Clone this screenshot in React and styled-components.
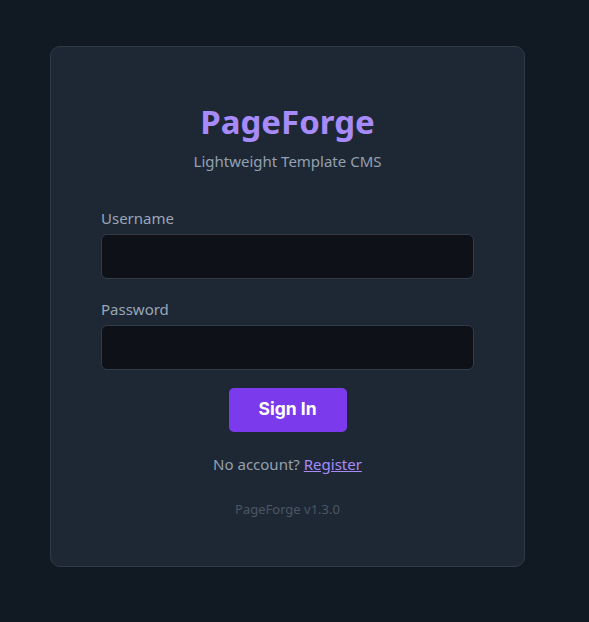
import React from 'react';
import styled, { createGlobalStyle } from 'styled-components';

const GlobalStyle = createGlobalStyle`
    * { box-sizing: border-box; }
    body {
        margin: 0;
        background-color: #111923;
        font-family: "Noto Sans", "Open Sans", sans-serif;
        min-height: 622px;
    }
`

const Page = styled.div`
    padding: 46px 0 0 50px;
`

const Card = styled.div`
    width: 475px;
    height: 521px;
    padding: 54px 50px 0;

    background-color: #1e2835;
    border: 1px solid #2f3a48;
    border-radius: 10px;

    display: flex;
    flex-direction: column;
`

const Title = styled.h1`
    margin: 0;
    text-align: center;
    color: #a78bfa;
    font-size: 33px;
    line-height: 42px;
    font-weight: 700;
`

const Subtitle = styled.p`
    margin: 8px 0 37px;
    text-align: center;
    color: #94a0b0;
    font-size: 15px;
    line-height: 20px;
`

const Fields = styled.div`
    display: flex;
    flex-direction: column;
    gap: 20px;
`

const Field = styled.div`
    display: flex;
    flex-direction: column;
    gap: 6px;
`

const Label = styled.label`
    color: #9aa6b6;
    font-size: 15px;
    line-height: 20px;
`

const Input = styled.input`
    height: 45px;
    width: 100%;
    padding: 0 12px;

    background-color: #0e1118;
    border: 1px solid #323c49;
    border-radius: 6px;
    color: #e5e7eb;
    font-size: 15px;
    outline: none;
`

const Button = styled.button`
    align-self: center;
    width: 118px;
    height: 44px;
    margin-top: 18px;
    padding: 0 0 4px;

    background-color: #7c3aed;
    color: white;
    border: none;
    border-radius: 5px;
    cursor: pointer;

    font-family: Inter, "Liberation Sans", sans-serif;
    font-size: 17.5px;
    font-weight: 700;
`

const Note = styled.p`
    margin: 22px 0 0;
    text-align: center;
    color: #94a0b0;
    font-size: 15px;
    line-height: 20px;
`

const RegisterLink = styled.a`
    color: #a78bfa;
    text-decoration: underline;
`

const Footer = styled.p`
    margin: 26px 0 0;
    text-align: center;
    color: #4b5664;
    font-size: 13px;
    line-height: 18px;
`

const App = () => {
    return (
        <>
            <GlobalStyle />
            <Page>
                <Card>
                    <Title>PageForge</Title>
                    <Subtitle>Lightweight Template CMS</Subtitle>

                    <Fields>
                        <Field>
                            <Label>Username</Label>
                            <Input type='text' />
                        </Field>

                        <Field>
                            <Label>Password</Label>
                            <Input type='password' />
                        </Field>
                    </Fields>

                    <Button>Sign In</Button>

                    <Note>
                        No account? <RegisterLink href='#'>Register</RegisterLink>
                    </Note>

                    <Footer>PageForge v1.3.0</Footer>
                </Card>
            </Page>
        </>
    );
};

export default App;
